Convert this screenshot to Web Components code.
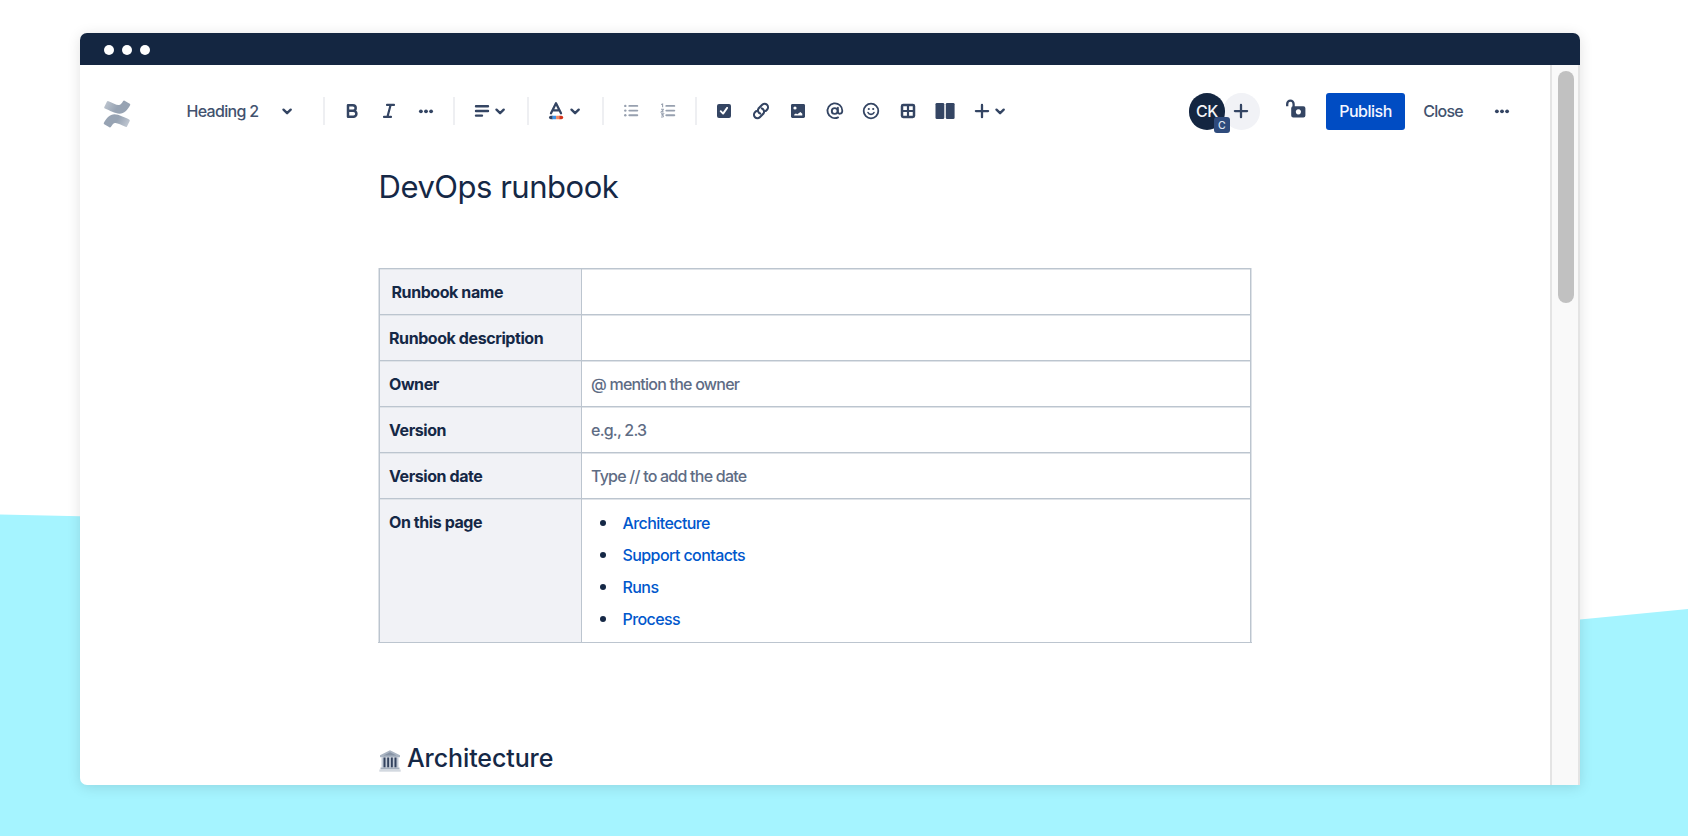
<!DOCTYPE html>
<html lang="en">
<head>
<meta charset="utf-8">
<title>DevOps runbook</title>
<style>
html,body{margin:0;height:100%;overflow:hidden;background:#fff}
body{font-family:Inter,"Liberation Sans",sans-serif;color:#152846}
</style>
</head>
<body>
<runbook-page></runbook-page>
<script>
const define = (name, css, html) => customElements.define(name, class extends HTMLElement {
  constructor() {
    super();
    this.attachShadow({mode: 'open'}).innerHTML = `<style>*{box-sizing:border-box}${css}</style>${html}`;
  }
});

const ICONS = {
  bold: '<path d="M8 6.2h4.9a2.75 2.75 0 0 1 0 5.6H8zM8 11.8h5.4a3 3 0 0 1 0 6H8z" fill="none" stroke="currentColor" stroke-width="2.5" stroke-linejoin="round"/>',
  italic: '<path d="M10 5.900h7M7 17.900h7M13.600 6l-3.200 12" fill="none" stroke="currentColor" stroke-width="2.200" stroke-linecap="round"/>',
  more: '<g fill="currentColor"><circle cx="6.900" cy="12.300" r="1.900"/><circle cx="12" cy="12.300" r="1.900"/><circle cx="17.100" cy="12.300" r="1.900"/></g>',
  chevron: '<path d="M8.500 10.700l3.600 3.500 3.600-3.500" fill="none" stroke="currentColor" stroke-width="2.400" stroke-linecap="round" stroke-linejoin="round"/>',
  align: '<path d="M6 7.300h12M6 12h12M6 16.600h6" fill="none" stroke="currentColor" stroke-width="2.400" stroke-linecap="round"/>',
  color: '<path d="M7 14.300L12 4.300 17 14.300M8.500 11.300h7" fill="none" stroke="currentColor" stroke-width="2.300" stroke-linecap="round" stroke-linejoin="round"/><path d="M5 18.500a1.800 1.800 0 0 1 1.800-1.800h2v3.600h-2a1.800 1.800 0 0 1-1.800-1.800z" fill="#344563"/><path d="M8.500 16.700h3.600v3.600H8.500z" fill="#3d93e8"/><path d="M12.100 16.700h3.600v3.600h-3.600z" fill="#f4875f"/><path d="M15.400 16.700h2a1.800 1.800 0 0 1 0 3.600h-2z" fill="#d3341c"/>',
  bullets: '<path d="M10.300 6.900h8M10.300 11.600h8M10.300 16.200h8" fill="none" stroke="currentColor" stroke-width="1.900" stroke-linecap="round"/><g fill="currentColor"><circle cx="6.300" cy="6.900" r="1.200"/><circle cx="6.300" cy="11.600" r="1.200"/><circle cx="6.300" cy="16.200" r="1.200"/></g>',
  numbers: '<path d="M10.300 6.900h8M10.300 11.600h8M10.300 16.200h8" fill="none" stroke="currentColor" stroke-width="1.900" stroke-linecap="round"/><path d="M5.200 5.600l1.400-.5v3.200M5 10.300h2.300v.5L5.200 12.900h2.400M5 14.900h2.500l-1.200 1.300c1.700.2 1.400 1.800 0 1.800H5" fill="none" stroke="currentColor" stroke-width="1.100"/>',
  check: '<rect x="5" y="5" width="14" height="14" rx="2" fill="currentColor"/><path d="M8.700 12.200l2.400 2.400 4-5.700" fill="none" stroke="#fff" stroke-width="1.900" stroke-linecap="round" stroke-linejoin="round"/>',
  link: '<g transform="rotate(-45 12 12)" fill="none" stroke="currentColor" stroke-width="2.100" stroke-linecap="round"><path d="M9.600 13.200a3.300 3.300 0 0 1 2.400-4.700h5.200a3.400 3.400 0 0 1 0 6.800h-1.800"/><path d="M14.400 10.800a3.300 3.300 0 0 1-2.400 4.700H6.800a3.400 3.400 0 0 1 0-6.800h1.800"/></g>',
  image: '<rect x="5" y="5" width="14" height="14" rx="1.400" fill="currentColor"/><circle cx="9" cy="9" r="1.600" fill="#fff"/><path d="M8.200 16.600v-1.200l1.700-1 1.400.9 3.100-2.400 1.900 1.900v1.800z" fill="#fff"/>',
  mention: '<circle cx="11.700" cy="12" r="2.900" fill="none" stroke="currentColor" stroke-width="1.900"/><path d="M14.900 8.700v3.900c0 3.100 4.400 2.800 4.400-.8a7.400 7.400 0 1 0-4.200 6.600" fill="none" stroke="currentColor" stroke-width="1.800" stroke-linecap="round"/>',
  emoji: '<circle cx="12" cy="12" r="7.300" fill="none" stroke="currentColor" stroke-width="1.800"/><circle cx="9.800" cy="10" r="1.100" fill="currentColor"/><circle cx="14.200" cy="10" r="1.100" fill="currentColor"/><path d="M9 13.500c1 2.500 5 2.500 6 0" fill="none" stroke="currentColor" stroke-width="1.600" stroke-linecap="round"/>',
  table: '<rect x="6" y="6" width="12" height="12" rx="1.200" fill="none" stroke="currentColor" stroke-width="2.500"/><path d="M12 6v12M6 12h12" stroke="currentColor" stroke-width="2.200"/>',
  columns: '<rect x="2.500" y="3.900" width="8.800" height="16.200" rx="1.400" fill="currentColor"/><rect x="12.800" y="3.900" width="8.800" height="16.200" rx="1.400" fill="currentColor"/>',
  plus: '<path d="M12 6v12.200M5.900 12.100h12.200" fill="none" stroke="currentColor" stroke-width="2.300" stroke-linecap="round"/>',
  lock: '<path d="M3.200 8.200V5.900a3.200 3.200 0 0 1 6.400 0V9" fill="none" stroke="currentColor" stroke-width="2.300"/><path d="M9.200 8.200h10.200a2 2 0 0 1 2 2v7.400a2 2 0 0 1-2 2H9.200a2 2 0 0 1-2-2v-7.400a2 2 0 0 1 2-2zM14.400 11.300a2.600 2.600 0 1 0 .01 0z" fill="currentColor" fill-rule="evenodd"/>'
};

customElements.define('ui-icon', class extends HTMLElement {
  connectedCallback() {
    if (this.shadowRoot) return;
    this.attachShadow({mode: 'open'}).innerHTML = `<style>
      :host{display:flex;justify-content:center;align-items:center;width:36.75px;height:24px;flex:none}
      svg{width:24px;height:24px;flex:none;overflow:visible;display:block}
    </style><svg viewBox="0 0 24 24" aria-hidden="true">${ICONS[this.getAttribute('name')]}</svg>`;
  }
});

define('tool-separator', ':host{display:block;width:2px;height:28px;margin:0 8.7px;background:#eeeff2;flex:none}', '');

define('tool-dropdown', ':host{display:flex;width:55.1px;flex:none}.c{margin-left:-18.4px}',
  '<slot></slot><ui-icon class="c" name="chevron"></ui-icon>');

define('confluence-logo', ':host{display:block;width:28px;height:28px;flex:none}svg{display:block}', `
  <svg width="28" height="28" viewBox="0 0 28 28">
    <defs><linearGradient id="a" x1="0" y1="0" x2="1" y2=".3"><stop offset="0" stop-color="#c3cad3"/><stop offset=".6" stop-color="#97a3b3"/></linearGradient>
    <linearGradient id="b" x1="1" y1="1" x2="0" y2=".7"><stop offset="0" stop-color="#c9cfd8"/><stop offset=".6" stop-color="#97a3b3"/></linearGradient></defs>
    <path d="M4 1.600Q4.600 .8 5.500 1.200C10 3 14 5.600 16.200 5C18 4.500 19 2.700 20 1.200Q20.700 .2 21.600 .7L26.800 3.700Q27.700 4.300 27.100 5.200C24.500 10 21.300 13.700 16.500 13.700C12 13.700 6.500 10.400 1.900 8.600Q.8 8.100 1.300 7.100Z" fill="url(#a)"/>
    <path d="M24 26.400Q23.400 27.200 22.500 26.800C18 25 14 22.400 11.800 23C10 23.500 9 25.300 8 26.800Q7.300 27.800 6.400 27.300L1.200 24.300Q.3 23.700 .9 22.800C3.500 18 6.700 14.300 11.500 14.300C16 14.300 21.500 17.600 26.100 19.400Q27.200 19.900 26.700 20.900Z" fill="url(#b)"/>
  </svg>`);

define('user-avatars', `:host{display:flex;align-items:center;width:71px;height:37px;flex:none}
  .a{position:relative;z-index:1;width:37px;height:37px;border-radius:50%;background:#142641;color:#f4f5f7;display:flex;align-items:center;justify-content:center;font-size:16px;font-weight:500;letter-spacing:-.5px}
  .b{position:absolute;left:25px;top:24.500px;width:16px;height:16px;border-radius:3px;background:#2f4b7c;font-size:10.500px;font-weight:500;color:#dfe5f0;display:flex;align-items:center;justify-content:center}
  .p{width:37px;height:37px;border-radius:50%;background:#f1f2f6;margin-left:-2.500px;display:flex;align-items:center;justify-content:center}`,
  '<div class="a"><span>CK</span><span class="b">C</span></div><div class="p"><ui-icon name="plus"></ui-icon></div>');

define('editor-toolbar', `:host{display:flex;align-items:center;height:92px;padding-left:23px;color:#344563;font-size:16px;font-weight:450}
  confluence-logo{margin-top:6px}
  .style{display:flex;align-items:center;margin-left:55.500px;width:128px}
  .style span{width:82px;letter-spacing:-.7px;white-space:nowrap;color:#42526e}
  .dim{display:flex;color:#97a0af}
  .insert{display:flex;margin-left:.700px}
  .right{display:flex;align-items:center;margin-left:auto;margin-right:30px}
  .lock{margin:-2px 0 0 18.500px}
  .pub{margin-left:11.500px;width:78.500px;height:37px;border-radius:3px;background:#004cc3;color:#f4f7ff;display:flex;align-items:center;justify-content:center;letter-spacing:-.5px}
  .close{margin-left:18.500px;width:60px;letter-spacing:-.75px;color:#42526e}`,
  `<confluence-logo></confluence-logo>
  <div class="style"><span>Heading 2</span><ui-icon name="chevron"></ui-icon></div>
  <tool-separator></tool-separator>
  <ui-icon name="bold"></ui-icon><ui-icon name="italic"></ui-icon><ui-icon name="more"></ui-icon>
  <tool-separator></tool-separator>
  <tool-dropdown><ui-icon name="align"></ui-icon></tool-dropdown>
  <tool-separator></tool-separator>
  <tool-dropdown><ui-icon name="color"></ui-icon></tool-dropdown>
  <tool-separator></tool-separator>
  <div class="dim"><ui-icon name="bullets"></ui-icon><ui-icon name="numbers"></ui-icon></div>
  <tool-separator></tool-separator>
  <div class="insert"><ui-icon name="check"></ui-icon><ui-icon name="link"></ui-icon><ui-icon name="image"></ui-icon><ui-icon name="mention"></ui-icon><ui-icon name="emoji"></ui-icon><ui-icon name="table"></ui-icon><ui-icon name="columns"></ui-icon>
  <tool-dropdown><ui-icon name="plus"></ui-icon></tool-dropdown></div>
  <div class="right"><user-avatars></user-avatars><ui-icon class="lock" name="lock"></ui-icon>
    <div class="pub">Publish</div><div class="close">Close</div><ui-icon name="more"></ui-icon></div>`);

define('info-row', `:host{display:grid;grid-template-columns:201px 1fr;min-height:46px;border:solid #bcc5cf;border-width:1px 1px 0;font-size:16px;line-height:24px}
  .h,.v{box-shadow:inset 0 1px #dfe3e8}
  .h{background:#f1f2f6;padding:11px 9px 0;font-weight:700;letter-spacing:-.42px}
  .v{border-left:1px solid #bcc5cf;padding:11px 9px 0;color:#5e6c84;font-weight:450;letter-spacing:-.77px}`,
  '<div class="h"><slot name="label"></slot></div><div class="v"><slot></slot></div>');

define('link-item', `:host{display:flex;align-items:center;height:32.200px;color:#0057cc;letter-spacing:-.58px}
  i{width:6px;height:6px;border-radius:50%;background:#152846;margin:0 16.500px 0 9px}`, '<i></i><slot></slot>');

define('runbook-doc', `:host{display:block;width:874px;margin-left:298px}
  h1{margin:0;padding:10px 0 0 .5px;font-size:31px;line-height:40px;font-weight:400;letter-spacing:-.48px}
  .t{margin-top:61px;border:solid #dfe3e8;border-width:0 1px;box-shadow:0 1px #bcc5cf}
  .n{padding-left:2.500px}
  .last{min-height:144px}
  .l{margin-top:-3.500px;height:129px}
  h2{margin:96px 0 0;display:flex;align-items:center;font-size:25px;line-height:40px;font-weight:500;letter-spacing:-.1px}
  h2 svg{margin:5px 6px 0 1px;flex:none}`,
  `<h1>DevOps runbook</h1>
  <div class="t">
    <info-row><span slot="label" class="n">Runbook name</span></info-row>
    <info-row><span slot="label">Runbook description</span></info-row>
    <info-row><span slot="label">Owner</span>@ mention the owner</info-row>
    <info-row><span slot="label">Version</span>e.g., 2.3</info-row>
    <info-row><span slot="label">Version date</span>Type // to add the date</info-row>
    <info-row class="last"><span slot="label">On this page</span><div class="l"><link-item>Architecture</link-item><link-item>Support contacts</link-item><link-item>Runs</link-item><link-item>Process</link-item></div></info-row>
  </div>
  <h2><svg width="22" height="22" viewBox="0 0 22 22">
    <path d="M11 .3L21 5.300v1.900H1V5.300z" fill="#a9b4c2"/><path d="M11 2.200l6.500 3.300h-13z" fill="#8793a5"/>
    <path d="M2.500 7.200h17v10.500h-17z" fill="#c3cbd6"/>
    <path d="M4.500 7.500h2v10h-2zM8.200 7.500h1.900v10H8.200zM11.900 7.500h1.900v10h-1.900zM15.500 7.500h2v10h-2z" fill="#33425e"/>
    <path d="M1.500 17.500h19v2h-19z" fill="#a4afbd"/><path d="M.3 19.500h21.400v2.200H.3z" fill="#d3d9e0"/></svg><span>Architecture</span></h2>`);

define('window-bar', `:host{display:flex;align-items:center;gap:8px;height:32px;padding:2px 0 0 24px;background:#142641;border-radius:7px 7px 0 0;box-sizing:border-box}
  i{width:10px;height:10px;border-radius:50%;background:#fff}`, '<i></i><i></i><i></i>');

define('scroll-bar', `:host{display:block;width:30px;box-sizing:border-box;flex:none;background:#f9f9f9;border:solid #e4e4e4;border-width:0 2px;padding:6px 4px 0 6px}
  div{height:232px;border-radius:8px;background:#c1c1c1}`, '<div></div>');

define('app-window', `:host{display:flex;flex-direction:column;width:1500px;height:752px;border-radius:7px 7px 0 7px;background:#fff;box-shadow:0 2px 14px rgba(0,0,0,.12)}
  .b{display:flex;flex:1;min-height:0;overflow:hidden;border-radius:0 0 0 7px}.m{flex:1;overflow:hidden}`,
  '<window-bar></window-bar><div class="b"><div class="m"><slot></slot></div><scroll-bar></scroll-bar></div>');

define('runbook-page', `:host{display:block;position:relative;isolation:isolate;width:1688px;height:836px;overflow:hidden;padding:33px 0 0 80px;box-sizing:border-box}
  .bg{position:absolute;inset:0;z-index:-1}`,
  `<svg class="bg" width="1688" height="836"><path d="M0 514.500L80 516.300 800 600 1580 619.500 1688 609V836H0z" fill="#a5f4ff"/></svg>
  <app-window><editor-toolbar></editor-toolbar><runbook-doc></runbook-doc></app-window>`);
</script>
</body>
</html>
